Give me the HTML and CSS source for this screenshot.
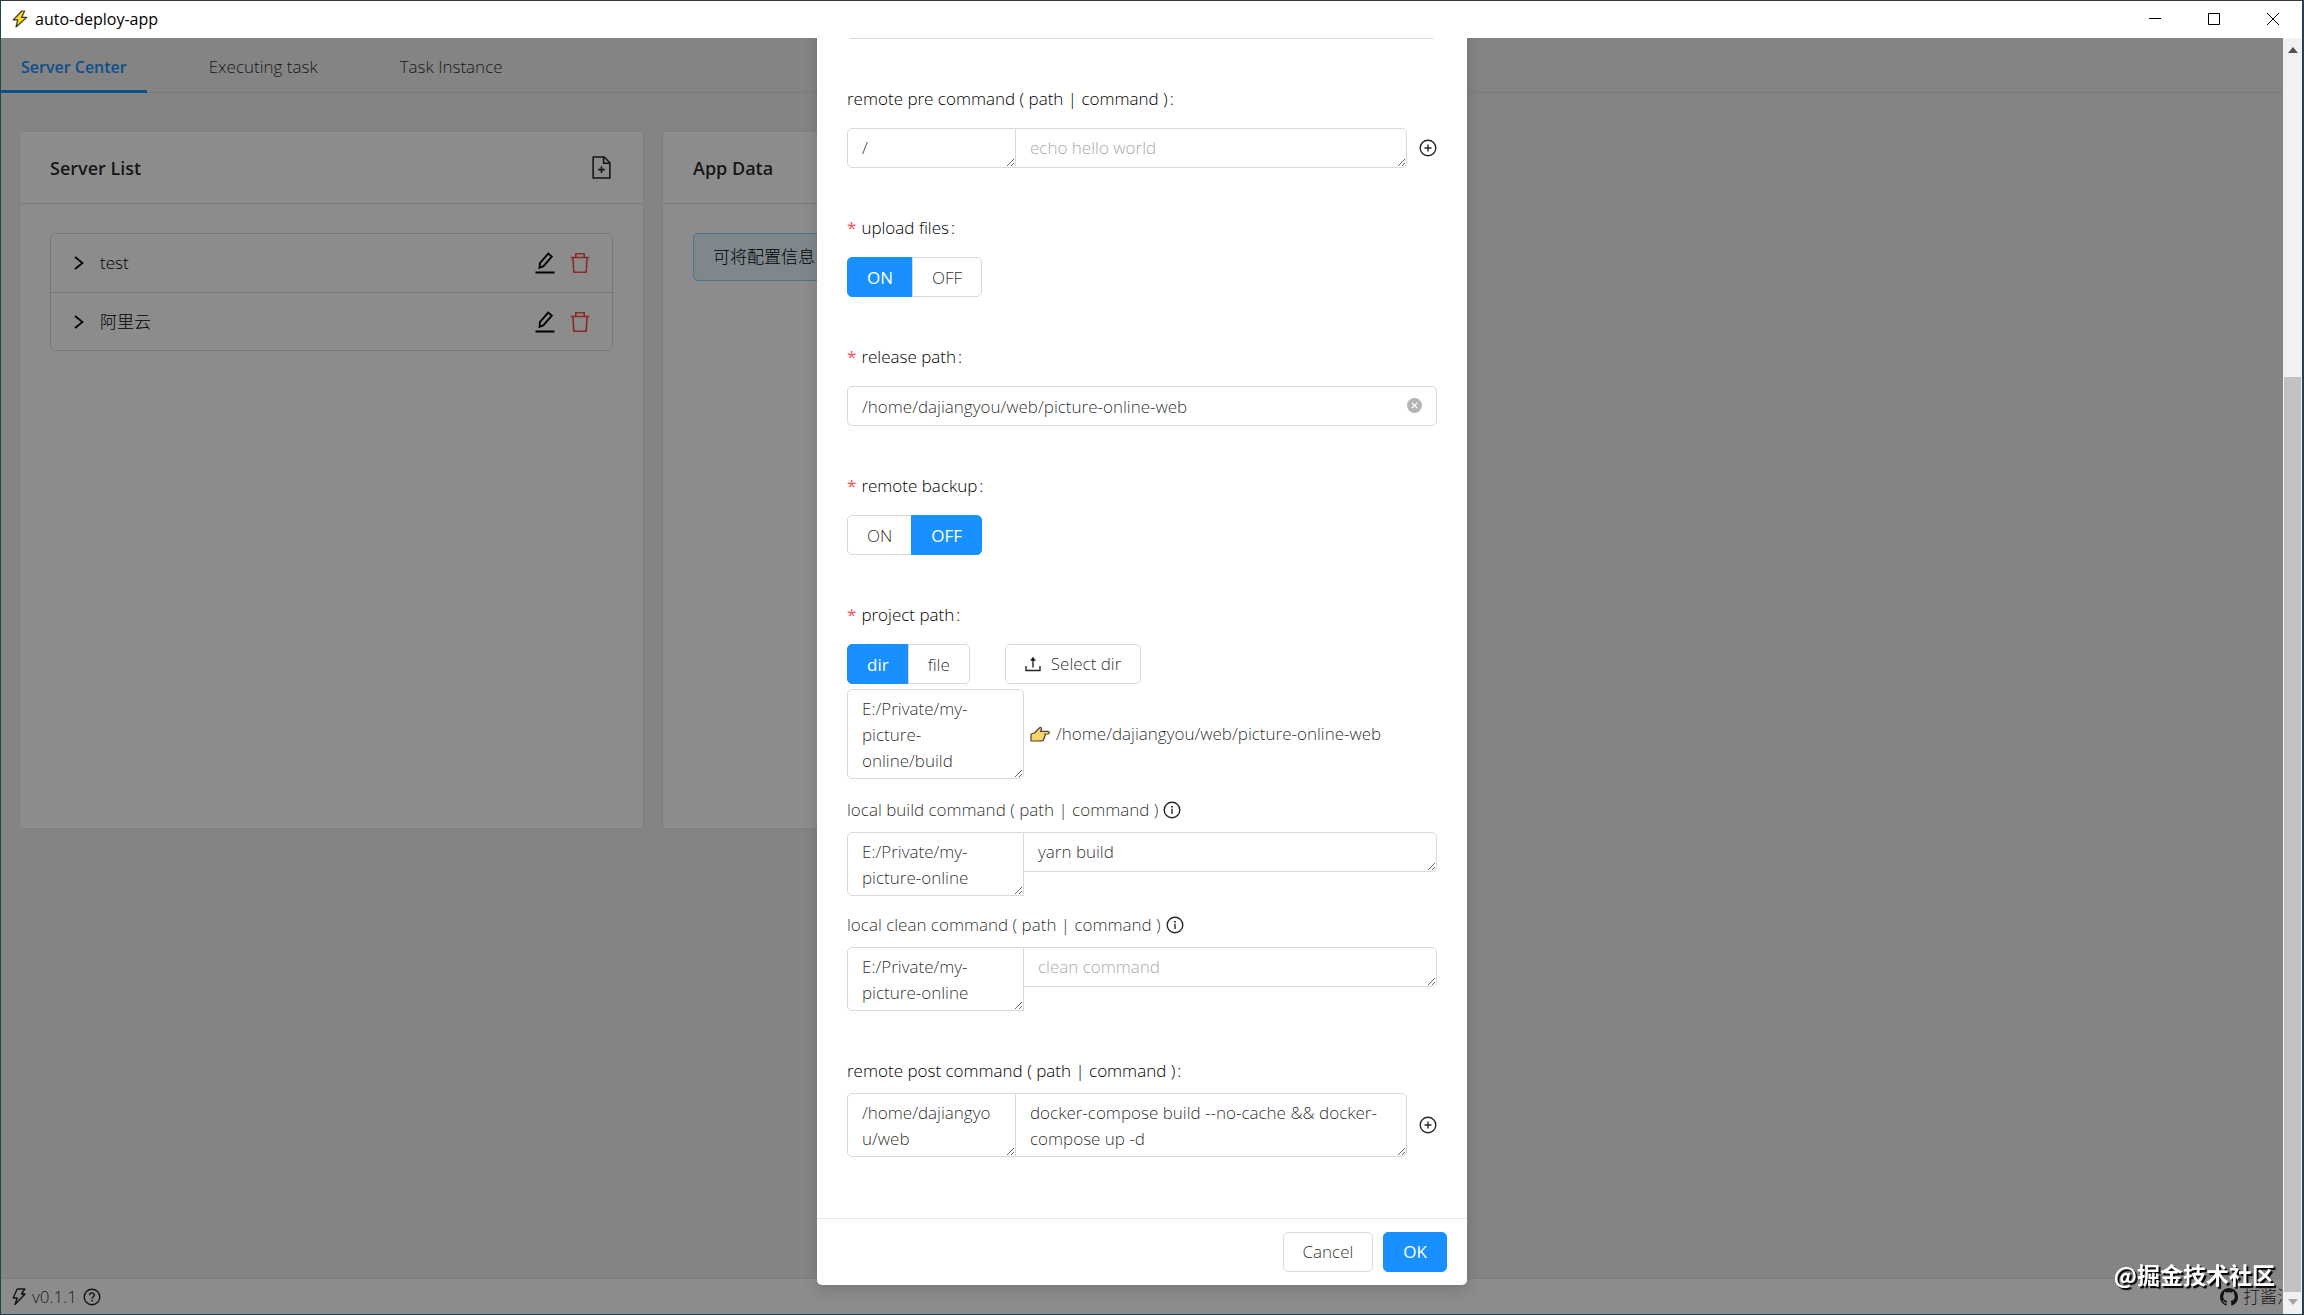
FILE: index.html
```html
<!DOCTYPE html>
<html lang="en">
<head>
    <meta charset="UTF-8">
    <meta name="viewport" content="width=device-width, initial-scale=1.0">
    <title>auto-deploy-app</title>
    <link rel="stylesheet" href="styles.css">
</head>
<body>
    <!-- shared icons -->
    <svg class="sprite" aria-hidden="true">
        <symbol id="i-plus-circle" viewBox="0 0 18 18"><g fill="none" stroke="currentColor" stroke-width="1.4"><circle cx="9" cy="9" r="7.8"/><path d="M9 5.5v7M5.5 9h7"/></g></symbol>
        <symbol id="i-info" viewBox="0 0 18 18"><circle cx="9" cy="9" r="7.8" fill="none" stroke="currentColor" stroke-width="1.4"/><path d="M8.3 7.8h1.4v5.2H8.3zM8.1 5h1.8v1.6H8.1z" fill="currentColor"/></symbol>
        <symbol id="i-edit" viewBox="0 0 20 22"><g fill="none" stroke="currentColor" stroke-width="1.8"><path d="M4.5 15.8l.4-4.6L13.2 1.6l3.6 3-8.3 9.6z"/><path d="M.5 20.5h19" stroke-width="2"/></g></symbol>
        <symbol id="i-delete" viewBox="0 0 20 22"><g fill="none" stroke="currentColor" stroke-width="1.6"><path d="M.8 5.5h18.4M5.8 5V1.8h8.4V5M3 6l.8 14.2h12.4L17 6"/></g></symbol>
        <symbol id="i-right" viewBox="0 0 12 16"><path d="M2 2l7.5 6L2 14" fill="none" stroke="currentColor" stroke-width="1.7"/></symbol>
    </svg>

    <div class="window">
        <header class="titlebar">
            <svg class="app-icon" viewBox="0 0 16 18"><path d="M9.8 1L1.2 9.8h4.5L4 17l10.8-9.6H9.6L12.6 1z" fill="#fbd928" stroke="#3a3524" stroke-width="1.2" stroke-linejoin="round"/></svg>
            <span class="app-name">auto-deploy-app</span>
            <div class="window-controls">
                <button aria-label="Minimize"><svg viewBox="0 0 12 12"><path d="M0 5.5h12"/></svg></button>
                <button aria-label="Maximize"><svg viewBox="0 0 12 12"><path d="M.5.5h11v11H.5z"/></svg></button>
                <button aria-label="Close"><svg viewBox="0 0 12 12"><path d="M0 0l12 12M12 0L0 12"/></svg></button>
            </div>
        </header>

        <div class="viewport">
            <div class="page">
                <nav class="tabs">
                    <a class="tab active" href="#server">Server Center</a>
                    <a class="tab" href="#executing">Executing task</a>
                    <a class="tab" href="#instance">Task Instance</a>
                </nav>

                <main class="content">
                    <section class="card">
                        <div class="card-head">
                            <h2>Server List</h2>
                            <button class="icon-btn" aria-label="Add server">
                                <svg class="icon-file" viewBox="0 0 18 22"><path d="M1 1h10.5L17 6.5V21H1zM11 1v6h6M9 9.8v6.4M5.8 13h6.4" fill="none" stroke="currentColor" stroke-width="1.5"/></svg>
                            </button>
                        </div>
                        <div class="card-body">
                            <ul class="collapse">
                                <li>
                                    <svg class="icon-right"><use href="#i-right"/></svg>
                                    <span class="name">test</span>
                                    <button class="icon-btn" aria-label="Edit"><svg class="icon-row"><use href="#i-edit"/></svg></button>
                                    <button class="icon-btn danger" aria-label="Delete"><svg class="icon-row"><use href="#i-delete"/></svg></button>
                                </li>
                                <li>
                                    <svg class="icon-right"><use href="#i-right"/></svg>
                                    <span class="name">阿里云</span>
                                    <button class="icon-btn" aria-label="Edit"><svg class="icon-row"><use href="#i-edit"/></svg></button>
                                    <button class="icon-btn danger" aria-label="Delete"><svg class="icon-row"><use href="#i-delete"/></svg></button>
                                </li>
                            </ul>
                        </div>
                    </section>
                    <section class="card">
                        <div class="card-head">
                            <h2>App Data</h2>
                        </div>
                        <div class="card-body">
                            <div class="alert">可将配置信息</div>
                        </div>
                    </section>
                </main>

                <footer class="statusbar">
                    <svg class="icon-flash" viewBox="0 0 14 18"><path d="M5.2 1h7.6L9.5 6H13L3 16.5 5.2 10H1.2z" fill="none" stroke="currentColor" stroke-width="1.4" stroke-linejoin="round"/></svg>
                    <span>v0.1.1</span>
                    <svg class="icon" viewBox="0 0 18 18"><g fill="none" stroke="currentColor" stroke-width="1.4"><circle cx="9" cy="9" r="7.8"/><path d="M6.6 7.3c0-3.2 4.8-3.1 4.8-.2 0 1.7-2.4 1.7-2.4 3.6"/></g><path d="M8.2 12h1.6v1.5H8.2z" fill="currentColor"/></svg>
                    <a class="author" href="#author">
                        <svg class="icon" viewBox="0 0 16 16"><path fill="currentColor" d="M8 0C3.58 0 0 3.58 0 8c0 3.54 2.29 6.53 5.47 7.59.4.07.55-.17.55-.38 0-.19-.01-.82-.01-1.49-2.01.37-2.53-.49-2.69-.94-.09-.23-.48-.94-.82-1.13-.28-.15-.68-.52-.01-.53.63-.01 1.08.58 1.23.82.72 1.21 1.87.87 2.33.66.07-.52.28-.87.51-1.07-1.78-.2-3.64-.89-3.64-3.95 0-.87.31-1.59.82-2.15-.08-.2-.36-1.02.08-2.12 0 0 .67-.21 2.2.82.64-.18 1.32-.27 2-.27s1.36.09 2 .27c1.53-1.04 2.2-.82 2.2-.82.44 1.1.16 1.92.08 2.12.51.56.82 1.27.82 2.15 0 3.07-1.87 3.75-3.65 3.95.29.25.54.73.54 1.48 0 1.07-.01 1.93-.01 2.2 0 .21.15.46.55.38A8.01 8.01 0 0 0 16 8c0-4.42-3.58-8-8-8z"/></svg>
                        <span>打酱油</span>
                    </a>
                </footer>

                <div class="mask">
                    <form class="modal" role="dialog" aria-label="Edit task">
                        <div class="modal-body">
                            <div class="form-item">
                                <input class="input" type="text" aria-label="name">
                            </div>

                            <div class="form-item">
                                <label class="label" for="pre-path">remote pre command ( path | command )</label>
                                <div class="command">
                                    <textarea class="path" id="pre-path" rows="1">/</textarea>
                                    <textarea class="cmd" rows="1" aria-label="remote pre command" placeholder="echo hello world"></textarea>
                                    <button class="icon-btn" type="button" aria-label="Add command"><svg class="icon"><use href="#i-plus-circle"/></svg></button>
                                </div>
                            </div>

                            <div class="form-item">
                                <span class="label required">upload files</span>
                                <div class="radio-group">
                                    <label><input type="radio" name="upload" checked><span>ON</span></label>
                                    <label><input type="radio" name="upload"><span>OFF</span></label>
                                </div>
                            </div>

                            <div class="form-item">
                                <label class="label required" for="release">release path</label>
                                <div class="input-wrap">
                                    <input class="input" id="release" type="text" value="/home/dajiangyou/web/picture-online-web">
                                    <button class="icon-btn clear" type="button" aria-label="Clear"><svg viewBox="0 0 16 16"><circle cx="8" cy="8" r="8" fill="currentColor"/><path d="M5.2 5.2l5.6 5.6M10.8 5.2l-5.6 5.6" stroke="#fff" stroke-width="1.4"/></svg></button>
                                </div>
                            </div>

                            <div class="form-item">
                                <span class="label required">remote backup</span>
                                <div class="radio-group">
                                    <label><input type="radio" name="backup"><span>ON</span></label>
                                    <label><input type="radio" name="backup" checked><span>OFF</span></label>
                                </div>
                            </div>

                            <div class="form-item">
                                <label class="label required" for="project">project path</label>
                                <div class="project-row">
                                    <div class="radio-group">
                                        <label><input type="radio" name="type" checked><span>dir</span></label>
                                        <label><input type="radio" name="type"><span>file</span></label>
                                    </div>
                                    <button class="btn" type="button">
                                        <svg class="icon-upload" viewBox="0 0 16 16"><path d="M1 10v4.5h14V10M8 11.5V3" fill="none" stroke="currentColor" stroke-width="1.4"/><path d="M8 .8l3 4H5z" fill="currentColor"/></svg>
                                        Select dir
                                    </button>
                                </div>
                                <div class="mapping">
                                    <textarea class="local" id="project" rows="3">E:/Private/my-picture-online/build</textarea>
                                    <svg class="hand" viewBox="0 0 20 18"><path d="M1 9l3.5-1L9.4 3c1.2-1.200 2.600-.1 2 1.300L10.500 6.300H18c1.600 0 1.600 2.700 0 2.700h-3.200c.8.700.5 2.100-.4 2.400.5.9.1 2-.8 2.200.3 1.300-.3 2.200-1.600 2.200L7 16H1z" fill="#fbd46a" stroke="#4a4436" stroke-width="1.2" stroke-linejoin="round"/></svg>
                                    <span>/home/dajiangyou/web/picture-online-web</span>
                                </div>
                                <label class="sub-label" for="build-path">local build command ( path | command ) <svg class="icon"><use href="#i-info"/></svg></label>
                                <div class="command">
                                    <textarea class="local" id="build-path" rows="2">E:/Private/my-picture-online</textarea>
                                    <textarea class="cmd" rows="1" aria-label="local build command">yarn build</textarea>
                                </div>
                                <label class="sub-label" for="clean-path">local clean command ( path | command ) <svg class="icon"><use href="#i-info"/></svg></label>
                                <div class="command">
                                    <textarea class="local" id="clean-path" rows="2">E:/Private/my-picture-online</textarea>
                                    <textarea class="cmd" rows="1" aria-label="local clean command" placeholder="clean command"></textarea>
                                </div>
                            </div>

                            <div class="form-item">
                                <label class="label tight" for="post-path">remote post command ( path | command )</label>
                                <div class="command">
                                    <textarea class="path" id="post-path" rows="2">/home/dajiangyou/web</textarea>
                                    <textarea class="cmd" rows="2" aria-label="remote post command">docker-compose build --no-cache &amp;&amp; docker-compose up -d</textarea>
                                    <button class="icon-btn" type="button" aria-label="Add command"><svg class="icon"><use href="#i-plus-circle"/></svg></button>
                                </div>
                            </div>
                        </div>
                        <div class="modal-footer">
                            <button class="btn" type="button">Cancel</button>
                            <button class="btn primary" type="button">OK</button>
                        </div>
                    </form>
                </div>
            </div>

            <div class="scrollbar">
                <svg viewBox="0 0 10 6"><path d="M5 0l5 6H0z" fill="#505050"/></svg>
                <div class="thumb"></div>
                <svg viewBox="0 0 10 6"><path d="M5 6l5-6H0z" fill="#a3a3a3"/></svg>
            </div>
        </div>
    </div>
    <div class="watermark">@掘金技术社区</div>
</body>
</html>
```
FILE: styles.css
```css
* {
    box-sizing: border-box;
}
body {
    margin: 0;
    font-family: "Open Sans", "Noto Sans CJK SC", sans-serif;
    font-size: 17px;
    font-weight: 300;
    line-height: 26px;
    color: rgba(0, 0, 0, 0.85);
}
button, input, textarea {
    font: inherit;
    color: inherit;
}
svg {
    display: block;
}
.sprite {
    position: absolute;
    width: 0;
    height: 0;
}
.window {
    height: 100vh;
    display: flex;
    flex-direction: column;
    border: 1px solid #1f4351;
    border-top-color: #333b3f;
    border-right-width: 2px;
}

/* title bar */
.titlebar {
    flex: none;
    height: 37px;
    display: flex;
    align-items: center;
    padding: 0 0 2px 11px;
    background: #fff;
}
.app-icon {
    width: 16px;
    height: 18px;
}
.app-name {
    margin-left: 7px;
    font-size: 16px;
    font-weight: 400;
    color: #000;
}
.window-controls {
    display: flex;
    margin-left: auto;
}
.window-controls button {
    width: 59px;
    height: 35px;
    padding: 0;
    border: 0;
    background: none;
    display: flex;
    align-items: center;
    justify-content: center;
}
.window-controls svg {
    width: 12px;
    height: 12px;
    fill: none;
    stroke: #000;
    stroke-width: 1;
}

.viewport {
    flex: 1;
    min-height: 0;
    display: flex;
}
.page {
    position: relative;
    flex: 1;
    min-width: 0;
    overflow: hidden;
    display: flex;
    flex-direction: column;
    background: #f0f0f0;
}

/* tabs */
.tabs {
    height: 55px;
    display: flex;
    gap: 42px;
    border-bottom: 1px solid #e0e0e0;
}
.tab {
    height: 55px;
    padding: 16px 20px;
    color: inherit;
    text-decoration: none;
}
.tab.active {
    color: #1890ff;
    font-size: 16px;
    font-weight: 600;
    border-bottom: 3px solid #1890ff;
}

/* cards */
.content {
    flex: 1;
    display: flex;
    align-items: flex-start;
    gap: 18px;
    padding: 38px 18px;
}
.card {
    width: 28%;
    max-width: 625px;
    min-height: 698px;
    background: #fff;
    border: 1px solid #e8e8e8;
}
.card-head {
    height: 72px;
    padding: 0 32px 0 30px;
    display: flex;
    align-items: center;
    justify-content: space-between;
    border-bottom: 1px solid #e0e0e0;
}
.card-head h2 {
    margin: 0;
    font-size: 18px;
    font-weight: 600;
    color: rgba(0, 0, 0, 0.85);
}
.card-body {
    padding: 29px 30px;
}
.icon-btn {
    padding: 0;
    border: 0;
    background: none;
    cursor: pointer;
}
.icon-btn.danger {
    color: #ff4d4f;
}
.icon {
    width: 18px;
    height: 18px;
}
.icon-file {
    width: 19px;
    height: 23px;
}
.icon-row {
    width: 20px;
    height: 22px;
}
.icon-right {
    width: 12px;
    height: 16px;
}
.collapse {
    margin: 0;
    padding: 0;
    list-style: none;
    border: 1px solid #d9d9d9;
    border-radius: 5px;
    color: #000;
}
.collapse li {
    height: 58px;
    display: flex;
    align-items: center;
    gap: 15px;
    padding: 0 22px;
}
.collapse li + li {
    border-top: 1px solid #d9d9d9;
}
.collapse .name {
    flex: 1;
}
.alert {
    padding: 10px 19px;
    background: #e6f7ff;
    border: 1px solid #91d5ff;
    border-radius: 5px;
    color: #000;
}

/* status bar */
.statusbar {
    height: 36px;
    display: flex;
    align-items: center;
    gap: 6px;
    padding-left: 11px;
    background: #fff;
    border-top: 1px solid #e8e8e8;
}
.icon-flash {
    width: 14px;
    height: 18px;
}
.author {
    display: flex;
    align-items: center;
    gap: 5px;
    margin-left: auto;
    margin-right: -11px;
    color: inherit;
    text-decoration: none;
}

/* modal */
.mask {
    position: absolute;
    inset: 0;
    display: flex;
    align-items: flex-end;
    justify-content: center;
    padding-bottom: 29px;
    background: rgba(0, 0, 0, 0.45);
}
.modal {
    width: 650px;
    background: #fff;
    border-radius: 5px;
    box-shadow: 0 5px 15px rgba(0, 0, 0, 0.15);
}
.modal-body {
    padding: 30px 30px 31px;
}
.form-item {
    margin-bottom: 30px;
}
.label {
    display: flex;
    align-items: center;
    height: 59px;
    color: #000;
}
.label::after {
    content: ":";
    margin-left: 2px;
}
.label.required::before {
    content: "*";
    margin-right: 5px;
    color: #ff4d4f;
    font-weight: 400;
}
.label.tight {
    height: 52px;
    padding-top: 7px;
}
.input, textarea {
    display: block;
    padding: 6px 14px;
    border: 1px solid #d9d9d9;
    border-radius: 5px;
    background: #fff;
    outline: 0;
}
.input {
    width: 100%;
    height: 40px;
}
textarea {
    flex: none;
    min-height: 40px;
    padding: 6px 14px 4px;
    resize: both;
    overflow: hidden;
}
::placeholder {
    color: #aaa;
}
.input-wrap {
    position: relative;
}
.clear {
    position: absolute;
    right: 15px;
    top: 12px;
    color: #b5b5b5;
}
.clear svg {
    width: 15px;
    height: 15px;
}
.command {
    display: flex;
    align-items: flex-start;
}
.command .path {
    width: 169px;
    word-break: break-all;
}
.command textarea:first-child {
    border-radius: 5px 0 0 5px;
}
.local {
    width: 177px;
}
.command .cmd {
    flex: 1;
    margin-left: -1px;
    border-radius: 0 5px 5px 0;
}
.command .icon-btn {
    align-self: center;
    margin-left: 12px;
}
.radio-group {
    display: inline-flex;
}
.radio-group input {
    position: absolute;
    opacity: 0;
}
.radio-group span {
    display: block;
    height: 40px;
    padding: 7px 19px;
    border: 1px solid #d9d9d9;
    background: #fff;
}
.radio-group label:first-child span {
    border-radius: 5px 0 0 5px;
}
.radio-group label:last-child span {
    margin-left: -1px;
    border-radius: 0 5px 5px 0;
}
.radio-group input:checked + span {
    background: #1890ff;
    border-color: #1890ff;
    color: #fff;
    font-weight: 400;
}
.project-row {
    display: flex;
    gap: 35px;
    margin-bottom: 5px;
}
.btn {
    height: 40px;
    display: flex;
    align-items: center;
    gap: 10px;
    padding: 0 19px;
    border: 1px solid #d9d9d9;
    border-radius: 5px;
    background: #fff;
}
.btn.primary {
    background: #1890ff;
    border-color: #1890ff;
    color: #fff;
    font-weight: 400;
}
.icon-upload {
    width: 16px;
    height: 16px;
}
.mapping {
    display: flex;
    align-items: center;
    gap: 6px;
    margin-bottom: 2px;
}
.mapping .local {
    border-radius: 5px;
}
.hand {
    width: 20px;
    height: 18px;
}
.sub-label {
    display: flex;
    align-items: center;
    gap: 5px;
    height: 51px;
    padding-top: 6px;
}
.modal-footer {
    display: flex;
    justify-content: flex-end;
    gap: 10px;
    padding: 13px 20px;
    border-top: 1px solid #e8e8e8;
}

/* scrollbar */
.scrollbar {
    width: 19px;
    padding: 9px 0;
    display: flex;
    flex-direction: column;
    align-items: center;
    background: #f1f1f1;
}
.scrollbar svg {
    width: 10px;
    height: 6px;
}
.thumb {
    flex: 1;
    width: 17px;
    margin: 324px 0 7px;
    background: #c1c1c1;
}

.watermark {
    position: fixed;
    right: 29px;
    bottom: 28px;
    font-family: "Noto Sans CJK SC", sans-serif;
    font-size: 23px;
    font-weight: 700;
    color: #fff;
    text-shadow: 2px 2px 1px #000;
}
```
